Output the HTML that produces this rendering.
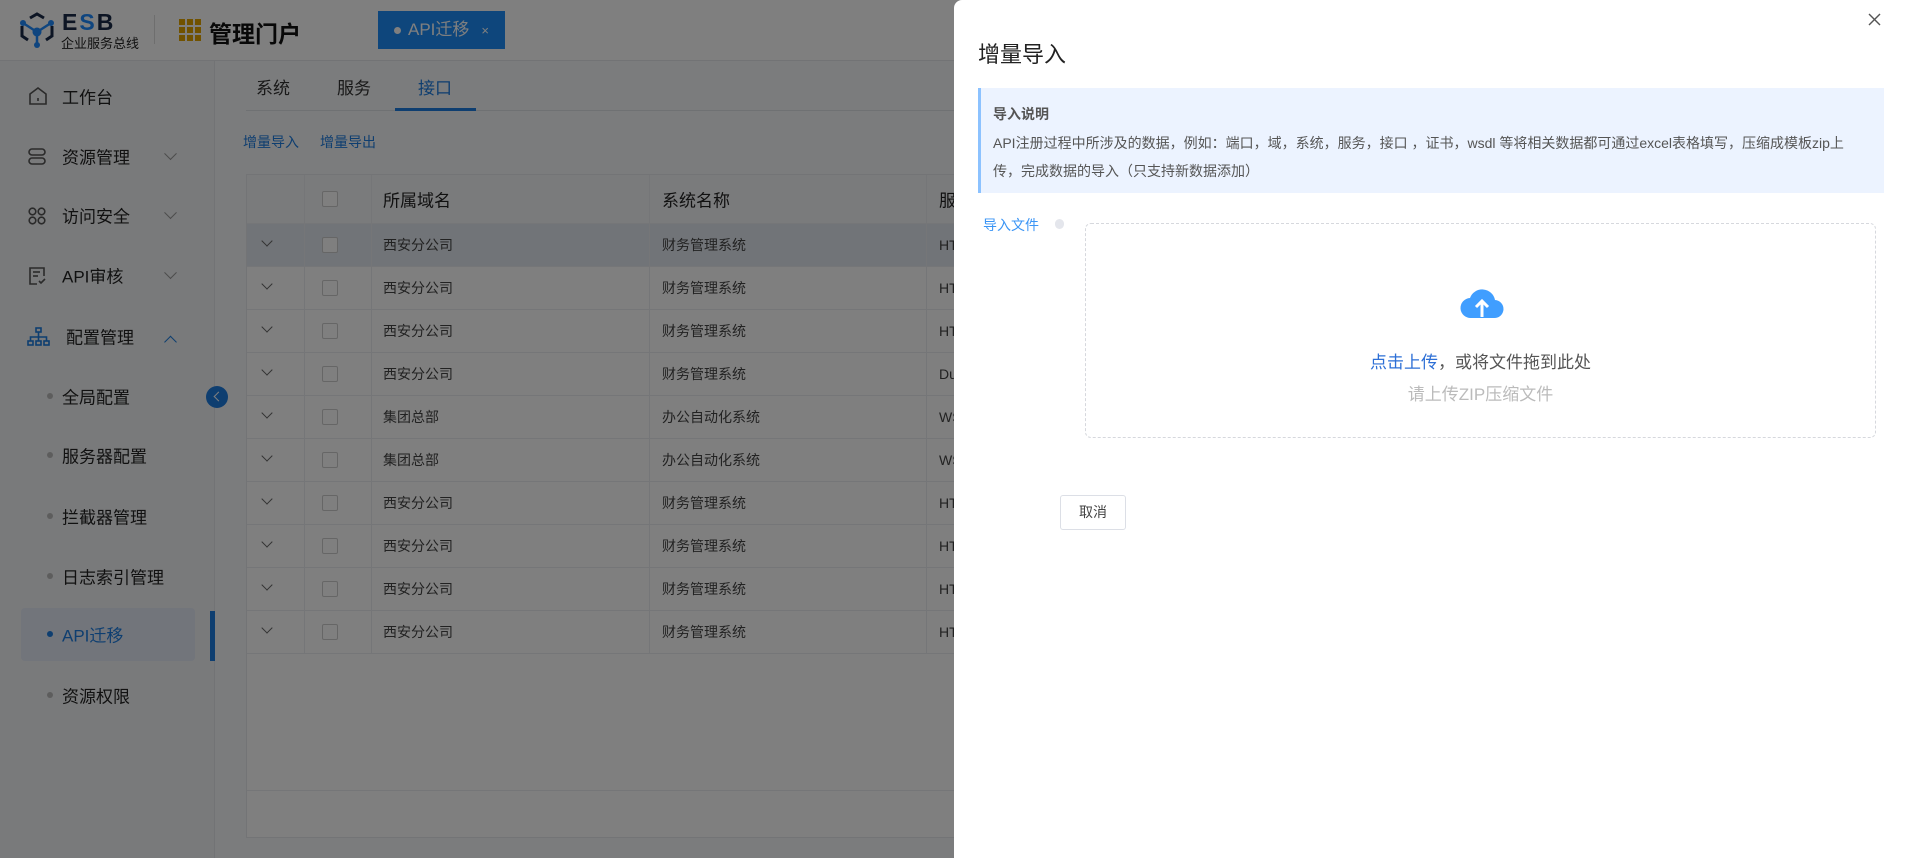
<!DOCTYPE html>
<html><head><meta charset="utf-8"><style>
*{margin:0;padding:0;box-sizing:border-box}
body{width:1908px;height:858px;overflow:hidden;position:relative;font-family:"Liberation Sans","Noto Sans CJK SC",sans-serif;background:#f7f8fa;color:#222}
.abs{position:absolute}
.hdr{left:0;top:0;width:1908px;height:61px;background:#fff;border-bottom:1px solid #e4e6ea}
.side{left:0;top:61px;width:215px;height:797px;background:#f3f4f6;border-right:1px solid #e4e6ea}
.mi{position:absolute;left:62px;font-size:17px;color:#222;transform:translateY(-50%)}
.sub{position:absolute;left:62px;font-size:17px;color:#222;transform:translateY(-50%)}
.dot{position:absolute;left:47px;width:6px;height:6px;border-radius:3px;background:#bbb;transform:translateY(-50%)}
.chev{position:absolute;left:166px;width:9px;height:9px;border-right:1.5px solid #999;border-bottom:1.5px solid #999;transform:translateY(-75%) rotate(45deg)}
.tbl{left:246px;top:174px;width:720px;height:664px;background:#fff;border:1px solid #e6e8ec}
.row{position:absolute;left:0;width:720px;height:43px;border-bottom:1px solid #ebedf0;font-size:14px;color:#444}
.row span{position:absolute;top:50%;transform:translateY(-50%)}
.cb{position:absolute;left:75px;top:50%;width:16px;height:16px;border:1px solid #ccc;border-radius:2px;background:#fff;transform:translateY(-50%)}
.rc{position:absolute;left:16px;top:40%;width:8px;height:8px;border-right:1.3px solid #666;border-bottom:1.3px solid #666;transform:translateY(-50%) rotate(45deg)}
.vl{position:absolute;top:0;width:1px;height:615px;background:#ebedf0}
.ov{left:0;top:0;width:1908px;height:858px;background:rgba(0,0,0,0.5)}
.dr{left:954px;top:0;width:954px;height:858px;background:#fff;border-radius:8px 0 0 0}
</style></head><body>
<div class="abs hdr"></div>
<svg class="abs" style="left:18px;top:12px" width="38" height="36" viewBox="0 0 38 36"><g fill="none" stroke="#1a2a48" stroke-width="3"><path d="M12 6l7-4 7 4"/><path d="M4 14v10l6 4"/><path d="M34 14v10l-6 4"/></g><g stroke="#1e8bff" stroke-width="2.5"><line x1="19" y1="20" x2="5" y2="11"/><line x1="19" y1="20" x2="33" y2="11"/><line x1="19" y1="20" x2="19" y2="33"/></g><g fill="#1e8bff"><circle cx="19" cy="20" r="4.5"/><circle cx="5" cy="11" r="3"/><circle cx="33" cy="11" r="3"/><circle cx="19" cy="33" r="3"/></g></svg>
<div class="abs" style="left:62px;top:9px;font-size:23px;font-weight:bold;color:#1a2a48;letter-spacing:2px">E<span style="color:#1e8bff">S</span>B</div>
<div class="abs" style="left:61px;top:33px;font-size:13px;color:#222">企业服务总线</div>
<div class="abs" style="left:154px;top:15px;width:1px;height:29px;background:#ddd"></div>
<svg class="abs" style="left:179px;top:19px" width="22" height="22"><g fill="#e3a500"><rect x="0" y="0" width="6" height="6"/><rect x="8" y="0" width="6" height="6"/><rect x="16" y="0" width="6" height="6"/><rect x="0" y="8" width="6" height="6"/><rect x="8" y="8" width="6" height="6"/><rect x="16" y="8" width="6" height="6"/><rect x="0" y="16" width="6" height="6"/><rect x="8" y="16" width="6" height="6"/><rect x="16" y="16" width="6" height="6"/></g></svg>
<div class="abs" style="left:209px;top:15px;font-size:23px;font-weight:bold;color:#111">管理门户</div>
<div class="abs" style="left:378px;top:11px;width:127px;height:38px;background:#1c8cf8;color:#fff;font-size:17px;line-height:38px;padding-left:16px"><span style="display:inline-block;width:7px;height:7px;border-radius:4px;background:#fff;vertical-align:middle;margin-right:7px"></span>API迁移<span style="font-size:13px;margin-left:12px">×</span></div>

<div class="abs side">
<svg class="abs" style="left:28px;top:25px" width="20" height="20" viewBox="0 0 20 20" fill="none" stroke="#555" stroke-width="1.6"><path d="M2 8l8-6 8 6v10H2z"/><line x1="10" y1="12" x2="10" y2="15"/></svg>
<div class="mi" style="top:35px">工作台</div>
<svg class="abs" style="left:28px;top:87px" width="18" height="18" viewBox="0 0 18 18" fill="none" stroke="#555" stroke-width="1.6"><rect x="1" y="1" width="16" height="6" rx="3"/><rect x="1" y="10" width="16" height="6" rx="3"/></svg>
<div class="mi" style="top:95px">资源管理</div><div class="chev" style="top:95px"></div>
<svg class="abs" style="left:28px;top:146px" width="18" height="18" viewBox="0 0 18 18" fill="none" stroke="#555" stroke-width="1.6"><circle cx="4.5" cy="4.5" r="3.3"/><circle cx="13.5" cy="4.5" r="3.3"/><circle cx="4.5" cy="13.5" r="3.3"/><circle cx="13.5" cy="13.5" r="3.3"/></svg>
<div class="mi" style="top:154px">访问安全</div><div class="chev" style="top:154px"></div>
<svg class="abs" style="left:28px;top:205px" width="18" height="20" viewBox="0 0 18 20" fill="none" stroke="#555" stroke-width="1.6"><path d="M16 10V2H2v16h7"/><line x1="5" y1="6" x2="12" y2="6"/><line x1="5" y1="10" x2="10" y2="10"/><path d="M11 15l2 2 4-4"/></svg>
<div class="mi" style="top:214px">API审核</div><div class="chev" style="top:214px"></div>
<svg class="abs" style="left:27px;top:266px" width="23" height="20" viewBox="0 0 23 20" fill="none" stroke="#1c7ce0" stroke-width="1.6"><rect x="9" y="1" width="5" height="4"/><rect x="1" y="14" width="5" height="4"/><rect x="9" y="14" width="5" height="4"/><rect x="17" y="14" width="5" height="4"/><path d="M11.5 5v4M3.5 14v-4h16v4M11.5 9v5"/></svg>
<div class="mi" style="top:275px;left:66px">配置管理</div><div class="chev" style="top:281px;transform:translateY(-50%) rotate(225deg);border-color:#1c7ce0"></div>
<div class="dot" style="top:335px"></div><div class="sub" style="top:335px">全局配置</div>
<div class="dot" style="top:394px"></div><div class="sub" style="top:394px">服务器配置</div>
<div class="dot" style="top:455px"></div><div class="sub" style="top:455px">拦截器管理</div>
<div class="dot" style="top:515px"></div><div class="sub" style="top:515px">日志索引管理</div>
<div class="abs" style="left:21px;top:547px;width:174px;height:53px;background:#e4ebf7;border-radius:4px"></div>
<div class="abs" style="left:210px;top:550px;width:5px;height:50px;background:#1c7ce0"></div>
<div class="dot" style="top:573px;background:#1c7ce0"></div><div class="sub" style="top:573px;color:#1c7ce0">API迁移</div>
<div class="dot" style="top:634px"></div><div class="sub" style="top:634px">资源权限</div>
</div>
<div class="abs" style="left:206px;top:386px;width:22px;height:22px;border-radius:11px;background:#1c7ce0"><div style="position:absolute;left:9px;top:7px;width:7px;height:7px;border-left:1.8px solid #fff;border-bottom:1.8px solid #fff;transform:rotate(45deg)"></div></div>

<div class="abs" style="left:246px;top:110px;width:720px;height:1px;background:#dfe2e6"></div>
<div class="abs" style="left:395px;top:108px;width:81px;height:3px;background:#1c7ce0"></div>
<div class="abs" style="left:256px;top:74px;font-size:17px;color:#333">系统</div>
<div class="abs" style="left:337px;top:74px;font-size:17px;color:#333">服务</div>
<div class="abs" style="left:418px;top:74px;font-size:17px;color:#1c7ce0">接口</div>
<div class="abs" style="left:243px;top:132px;font-size:14px;color:#1c7ce0">增量导入</div>
<div class="abs" style="left:320px;top:132px;font-size:14px;color:#1c7ce0">增量导出</div>

<div class="abs tbl">
<div class="row" style="top:0;height:49px;background:#f5f6f8;font-size:17px;color:#222"><div class="cb"></div><span style="left:136px">所属域名</span><span style="left:415px">系统名称</span><span style="left:692px">服</span></div>
<div class="row" style="top:49px;background:#e3e8f0"><div class="rc"></div><div class="cb"></div><span style="left:136px">西安分公司</span><span style="left:415px">财务管理系统</span><span style="left:692px">HT</span></div>
<div class="row" style="top:92px"><div class="rc"></div><div class="cb"></div><span style="left:136px">西安分公司</span><span style="left:415px">财务管理系统</span><span style="left:692px">HT</span></div>
<div class="row" style="top:135px"><div class="rc"></div><div class="cb"></div><span style="left:136px">西安分公司</span><span style="left:415px">财务管理系统</span><span style="left:692px">HT</span></div>
<div class="row" style="top:178px"><div class="rc"></div><div class="cb"></div><span style="left:136px">西安分公司</span><span style="left:415px">财务管理系统</span><span style="left:692px">Du</span></div>
<div class="row" style="top:221px"><div class="rc"></div><div class="cb"></div><span style="left:136px">集团总部</span><span style="left:415px">办公自动化系统</span><span style="left:692px">WS</span></div>
<div class="row" style="top:264px"><div class="rc"></div><div class="cb"></div><span style="left:136px">集团总部</span><span style="left:415px">办公自动化系统</span><span style="left:692px">WS</span></div>
<div class="row" style="top:307px"><div class="rc"></div><div class="cb"></div><span style="left:136px">西安分公司</span><span style="left:415px">财务管理系统</span><span style="left:692px">HT</span></div>
<div class="row" style="top:350px"><div class="rc"></div><div class="cb"></div><span style="left:136px">西安分公司</span><span style="left:415px">财务管理系统</span><span style="left:692px">HT</span></div>
<div class="row" style="top:393px"><div class="rc"></div><div class="cb"></div><span style="left:136px">西安分公司</span><span style="left:415px">财务管理系统</span><span style="left:692px">HT</span></div>
<div class="row" style="top:436px"><div class="rc"></div><div class="cb"></div><span style="left:136px">西安分公司</span><span style="left:415px">财务管理系统</span><span style="left:692px">HT</span></div>
<div class="vl" style="left:57px;height:479px"></div><div class="vl" style="left:124px;height:479px"></div><div class="vl" style="left:402px;height:479px"></div><div class="vl" style="left:679px;height:479px"></div>
<div class="abs" style="left:0;top:615px;width:720px;height:1px;background:#ebedf0"></div>
</div>

<div class="abs ov"></div>
<div class="abs dr">
<svg class="abs" style="left:914px;top:13px" width="13" height="13" viewBox="0 0 13 13" stroke="#555" stroke-width="1.4"><line x1="1" y1="1" x2="12" y2="12"/><line x1="12" y1="1" x2="1" y2="12"/></svg>
<div class="abs" style="left:24px;top:37px;font-size:22px;color:#222">增量导入</div>
<div class="abs" style="left:24px;top:88px;width:906px;height:105px;background:#ecf3ff;border-left:3px solid #8cc2ff;padding:17px 0 0 12px;font-size:14px;color:#555;line-height:28px">
<div style="font-weight:bold;line-height:18px;margin-bottom:6px">导入说明</div>
<div>API注册过程中所涉及的数据，例如：端口，域，系统，服务，接口 ，证书，wsdl 等将相关数据都可通过excel表格填写，压缩成模板zip上</div>
<div>传，完成数据的导入（只支持新数据添加）</div>
</div>
<div class="abs" style="left:29px;top:215px;font-size:14px;color:#3b95f5">导入文件</div>
<div class="abs" style="left:101px;top:219px;width:9px;height:10px;border-radius:5px;background:#e4e6ec"></div>
<div class="abs" style="left:131px;top:223px;width:791px;height:215px;border:1px dashed #d6d8dd;border-radius:6px"></div>
<svg class="abs" style="left:506px;top:284px" width="44" height="36" viewBox="0 0 44 36"><path d="M11 34a10 10 0 0 1-1-20 13 13 0 0 1 25 2 9 9 0 0 1-1 18z" fill="#409eff"/><path d="M22 33V18M16 23l6-6 6 6" stroke="#fff" stroke-width="3" fill="none"/></svg>
<div class="abs" style="left:131px;width:791px;top:348px;text-align:center;font-size:17px;color:#555"><span style="color:#2d6fd6">点击上传</span>，或将文件拖到此处</div>
<div class="abs" style="left:131px;width:791px;top:380px;text-align:center;font-size:17px;color:#bbb">请上传ZIP压缩文件</div>
<div class="abs" style="left:106px;top:495px;width:66px;height:35px;border:1px solid #dcdfe6;border-radius:3px;text-align:center;line-height:33px;font-size:14px;color:#444">取消</div>
</div>
</body></html>
